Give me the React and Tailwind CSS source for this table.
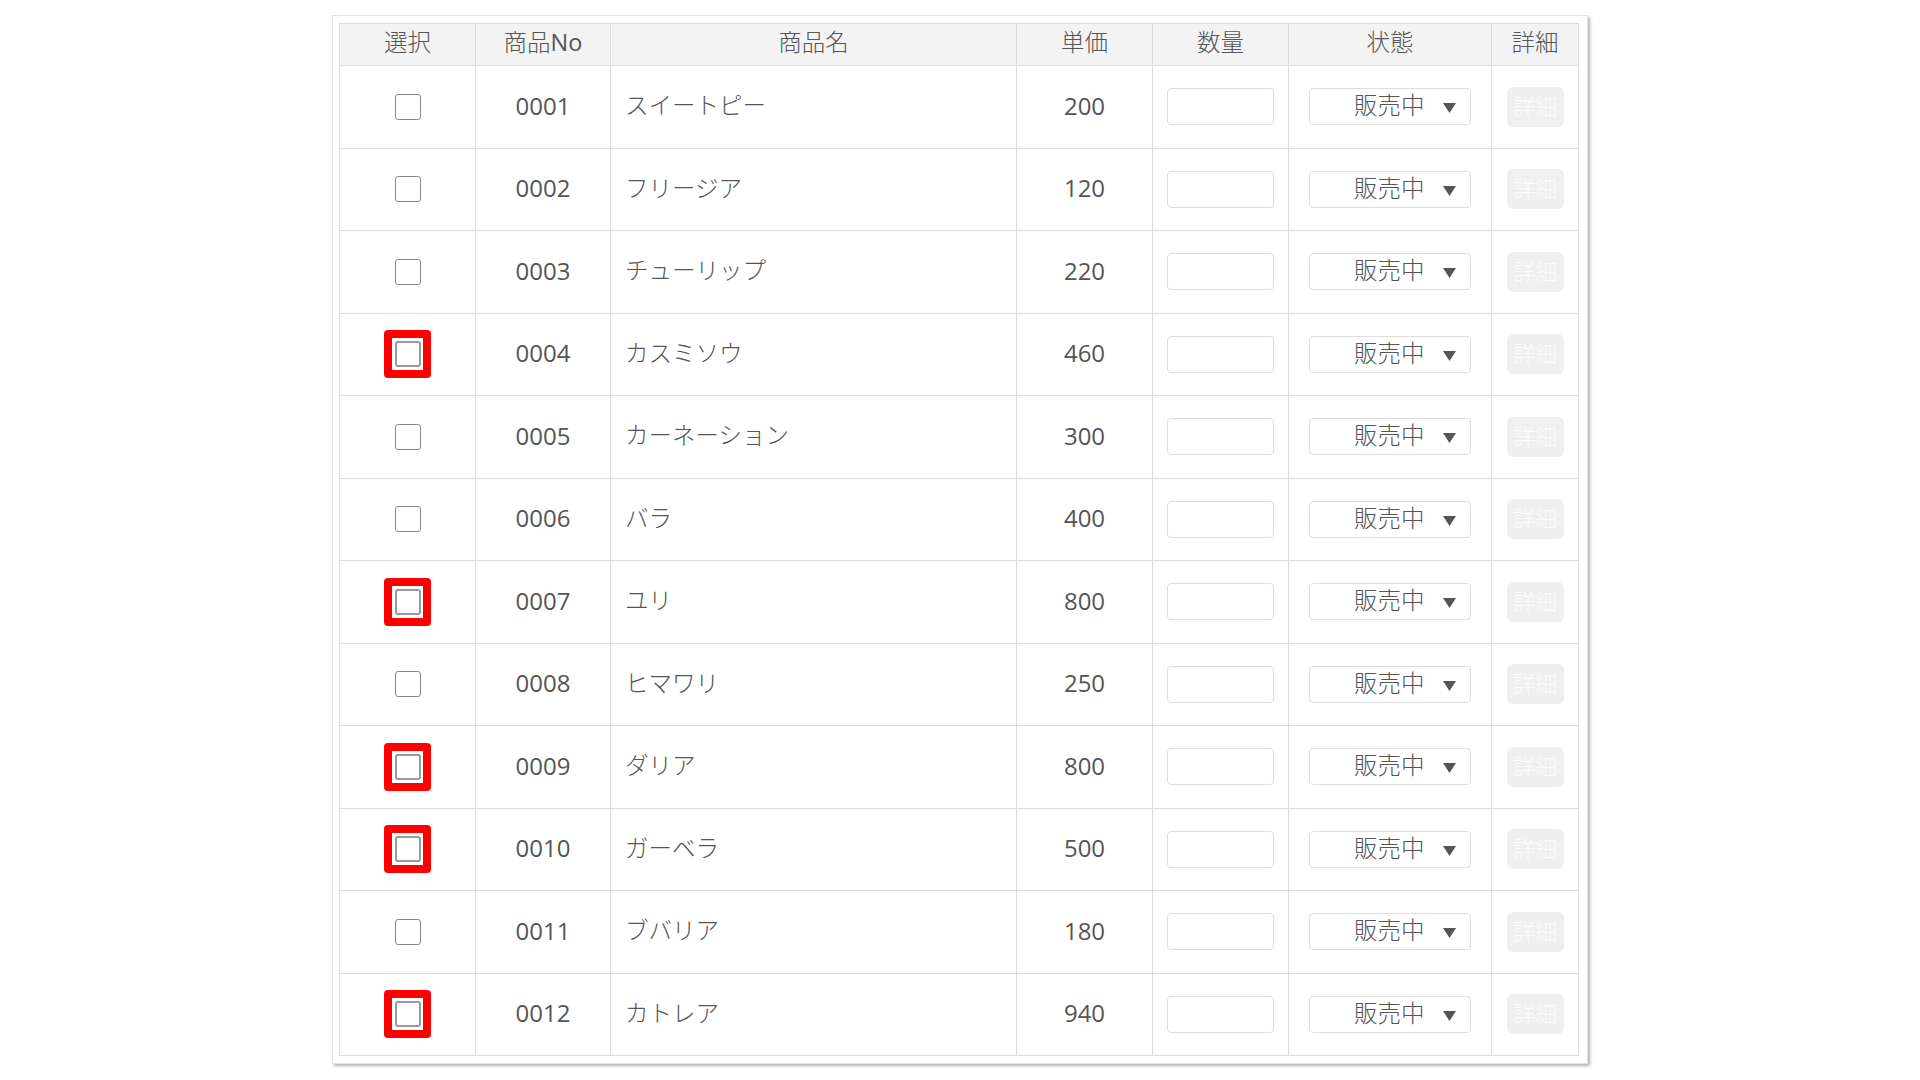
import React from "react";

const rows = [
  ["0001", "スイートピー", "200", false],
  ["0002", "フリージア", "120", false],
  ["0003", "チューリップ", "220", false],
  ["0004", "カスミソウ", "460", true],
  ["0005", "カーネーション", "300", false],
  ["0006", "バラ", "400", false],
  ["0007", "ユリ", "800", true],
  ["0008", "ヒマワリ", "250", false],
  ["0009", "ダリア", "800", true],
  ["0010", "ガーベラ", "500", true],
  ["0011", "ブバリア", "180", false],
  ["0012", "カトレア", "940", true],
];

function Checkbox() {
  return <div className="w-[26px] h-[26px] rounded-[3px] border-[1.5px] border-[#8a8a8a] bg-white" />;
}

export default function App() {
  const th = "border border-[#dcdcdc] font-light h-[42px] p-0 pb-[3px] text-center";
  const td = "border border-[#dcdcdc] p-0 pb-[2px] h-[82.5px]";
  return (
    <div
      className="w-full min-h-[1080px] bg-white pt-[15px]"
      style={{ fontFamily: '"Open Sans", "Noto Sans CJK JP", sans-serif' }}
    >
      <div className="mx-auto w-[1256px] border border-[#e2e2e2] bg-white pl-[6px] pr-[8px] pt-[7px] pb-[7px] shadow-[2px_2px_3px_rgba(0,0,0,0.3)]">
        <table className="border-collapse table-fixed w-[1239px] text-[#555] text-[23.5px] font-light leading-none">
          <colgroup>
            <col className="w-[136px]" />
            <col className="w-[135px]" />
            <col className="w-[406px]" />
            <col className="w-[136px]" />
            <col className="w-[136px]" />
            <col className="w-[203px]" />
            <col className="w-[87px]" />
          </colgroup>
          <thead>
            <tr className="bg-[#f3f3f3]">
              <th className={th}>選択</th>
              <th className={th}>
                商品<span className="font-normal">No</span>
              </th>
              <th className={th}>商品名</th>
              <th className={th}>単価</th>
              <th className={th}>数量</th>
              <th className={th}>状態</th>
              <th className={th}>詳細</th>
            </tr>
          </thead>
          <tbody>
            {rows.map(([no, name, price, hl]) => (
              <tr key={no}>
                <td className={td}>
                  <div className="flex justify-center items-center pt-[2px]">
                    {hl ? (
                      <div className="w-[47px] h-[48px] rounded-[4px] bg-[#ff0000] p-[8px]">
                        <div className="w-full h-full bg-white flex items-center justify-center">
                          <div className="w-[26px] h-[26px] rounded-[3px] border-2 border-[#9a9a9a] bg-white" />
                        </div>
                      </div>
                    ) : (
                      <Checkbox />
                    )}
                  </div>
                </td>
                <td className={td + " text-center font-normal text-[24px]"}>{no}</td>
                <td className={td + " pl-[14px]"}>{name}</td>
                <td className={td + " text-center font-normal text-[24px]"}>{price}</td>
                <td className={td}>
                  <div className="flex justify-center pt-[2px]">
                    <div className="w-[107px] h-[37px] border border-[#dedede] rounded-[4px] bg-white" />
                  </div>
                </td>
                <td className={td}>
                  <div className="flex justify-center pt-[2px]">
                    <div className="relative w-[162px] h-[37px] border border-[#dedede] rounded-[4px] bg-white flex items-center pl-[44px] pb-[2px]">
                      <span>販売中</span>
                      <svg className="absolute right-[14px] top-[14px]" width="13" height="10" viewBox="0 0 13 10">
                        <polygon points="0,0 13,0 6.5,10" fill="#555" />
                      </svg>
                    </div>
                  </div>
                </td>
                <td className={td}>
                  <div className="flex justify-center pt-[2px]">
                    <div className="w-[57px] h-[40px] rounded-[6px] bg-[#efefef] text-[#fbfbfb] text-[22px] flex items-center justify-center pb-[2px]">
                      詳細
                    </div>
                  </div>
                </td>
              </tr>
            ))}
          </tbody>
        </table>
      </div>
    </div>
  );
}
